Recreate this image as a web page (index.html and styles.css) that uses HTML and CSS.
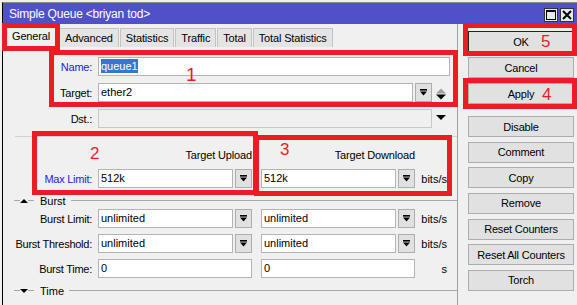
FILE: index.html
```html
<!DOCTYPE html>
<html lang="en">
<head>
    <meta charset="UTF-8">
    <title>Simple Queue</title>
    <link rel="stylesheet" href="styles.css">
</head>
<body>
    <div class="window">
        <div class="titlebar">
            <span class="title">Simple Queue &lt;briyan tod&gt;</span>
            <div class="win-btns">
                <span class="win-btn">
                    <svg width="10" height="10" viewBox="0 0 10 10"><rect x="0.5" y="0.5" width="9" height="9" fill="none" stroke="#000"/><rect x="0" y="0" width="10" height="2" fill="#000"/></svg>
                </span>
                <span class="win-btn">
                    <svg width="10" height="10" viewBox="0 0 10 10"><path d="M1 1 L9 9 M9 1 L1 9" stroke="#000" stroke-width="2"/></svg>
                </span>
            </div>
        </div>

        <div class="main">
            <div class="pane">
                <div class="tabs">
                    <span class="tab active">General</span>
                    <span class="tab">Advanced</span>
                    <span class="tab">Statistics</span>
                    <span class="tab">Traffic</span>
                    <span class="tab">Total</span>
                    <span class="tab">Total Statistics</span>
                </div>

                <div class="page">
                    <div class="row row-name">
                        <label class="lbl blue">Name:</label>
                        <div class="field w-name"><span class="sel">queue1</span></div>
                    </div>
                    <div class="row row-gap">
                        <label class="lbl">Target:</label>
                        <div class="field w-target">ether2</div>
                        <span class="drop"><svg width="7" height="7" viewBox="0 0 7 7"><rect x="0" y="0" width="7" height="1.6" fill="#000"/><path d="M0 2.6 H7 L3.5 6.6 Z" fill="#000"/></svg></span>
                        <span class="spin">
                            <svg width="10" height="12" viewBox="0 0 10 12"><path d="M0 5.5 H10 L5 0.5 Z" fill="#a0a0a0"/><path d="M0 6.5 H10 L5 11.5 Z" fill="#000"/></svg>
                        </span>
                    </div>
                    <div class="row row-gap">
                        <label class="lbl">Dst.:</label>
                        <div class="field w-dst disabled"></div>
                        <span class="tri-down"><svg width="10" height="5" viewBox="0 0 10 5"><path d="M0 0 H10 L5 5 Z" fill="#000"/></svg></span>
                    </div>

                    <div class="separator"></div>

                    <div class="row row-head">
                        <span class="lbl"></span>
                        <span class="col col-text">Target Upload</span>
                        <span class="col col-text">Target Download</span>
                    </div>

                    <div class="row row-max">
                        <label class="lbl blue">Max Limit:</label>
                        <div class="col">
                            <div class="field grow">512k</div>
                            <span class="drop"><svg width="7" height="7" viewBox="0 0 7 7"><rect x="0" y="0" width="7" height="1.6" fill="#000"/><path d="M0 2.6 H7 L3.5 6.6 Z" fill="#000"/></svg></span>
                        </div>
                        <div class="col">
                            <div class="field grow">512k</div>
                            <span class="drop"><svg width="7" height="7" viewBox="0 0 7 7"><rect x="0" y="0" width="7" height="1.6" fill="#000"/><path d="M0 2.6 H7 L3.5 6.6 Z" fill="#000"/></svg></span>
                        </div>
                        <span class="unit">bits/s</span>
                    </div>

                    <div class="group group-burst">
                        <span class="g-line short"></span>
                        <svg class="g-tri" width="8" height="4" viewBox="0 0 8 4"><path d="M0 4 H8 L4 0 Z" fill="#000"/></svg>
                        <span class="g-line short"></span>
                        <span class="g-title">Burst</span>
                        <span class="g-line long"></span>
                    </div>

                    <div class="row row-first">
                        <label class="lbl">Burst Limit:</label>
                        <div class="col">
                            <div class="field grow">unlimited</div>
                            <span class="drop"><svg width="7" height="7" viewBox="0 0 7 7"><rect x="0" y="0" width="7" height="1.6" fill="#000"/><path d="M0 2.6 H7 L3.5 6.6 Z" fill="#000"/></svg></span>
                        </div>
                        <div class="col">
                            <div class="field grow">unlimited</div>
                            <span class="drop"><svg width="7" height="7" viewBox="0 0 7 7"><rect x="0" y="0" width="7" height="1.6" fill="#000"/><path d="M0 2.6 H7 L3.5 6.6 Z" fill="#000"/></svg></span>
                        </div>
                        <span class="unit">bits/s</span>
                    </div>
                    <div class="row row-next">
                        <label class="lbl">Burst Threshold:</label>
                        <div class="col">
                            <div class="field grow">unlimited</div>
                            <span class="drop"><svg width="7" height="7" viewBox="0 0 7 7"><rect x="0" y="0" width="7" height="1.6" fill="#000"/><path d="M0 2.6 H7 L3.5 6.6 Z" fill="#000"/></svg></span>
                        </div>
                        <div class="col">
                            <div class="field grow">unlimited</div>
                            <span class="drop"><svg width="7" height="7" viewBox="0 0 7 7"><rect x="0" y="0" width="7" height="1.6" fill="#000"/><path d="M0 2.6 H7 L3.5 6.6 Z" fill="#000"/></svg></span>
                        </div>
                        <span class="unit">bits/s</span>
                    </div>
                    <div class="row row-next">
                        <label class="lbl">Burst Time:</label>
                        <div class="col">
                            <div class="field grow">0</div>
                        </div>
                        <div class="col">
                            <div class="field grow">0</div>
                        </div>
                        <span class="unit">s</span>
                    </div>

                    <div class="group group-time">
                        <span class="g-line short"></span>
                        <svg class="g-tri" width="8" height="4" viewBox="0 0 8 4"><path d="M0 0 H8 L4 4 Z" fill="#000"/></svg>
                        <span class="g-line short"></span>
                        <span class="g-title">Time</span>
                        <span class="g-line long"></span>
                    </div>
                </div>
            </div>

            <div class="actions">
                <button class="btn default">OK</button>
                <button class="btn">Cancel</button>
                <button class="btn">Apply</button>
                <div class="actions-lower">
                    <button class="btn">Disable</button>
                    <button class="btn">Comment</button>
                    <button class="btn">Copy</button>
                    <button class="btn">Remove</button>
                    <button class="btn">Reset Counters</button>
                    <button class="btn">Reset All Counters</button>
                    <button class="btn">Torch</button>
                </div>
            </div>
        </div>
    </div>

    <!-- red annotation boxes drawn over the screenshot -->
    <div class="mark box-general"></div>
    <div class="mark box-1"></div>
    <div class="mark box-2"></div>
    <div class="mark box-3"></div>
    <div class="mark box-ok"></div>
    <div class="mark box-apply"></div>
    <span class="num num-1">1</span>
    <span class="num num-2">2</span>
    <span class="num num-3">3</span>
    <span class="num num-4">4</span>
    <span class="num num-5">5</span>
</body>
</html>
```

FILE: styles.css
```css
body {
    margin: 0;
    padding-top: 2px;
    height: 303px;
    overflow: hidden;
    background-color: #f0f0f0;
    font-family: "Liberation Sans", Arial, sans-serif;
    font-size: 11px;
    color: #000;
}

.window {
    margin-left: 2px;
    border-left: 1px solid #000;
    border-top: 1px solid #8a8a8a;
    height: 302px;
}

.titlebar {
    height: 21px;
    background-color: #5050c8;
    display: flex;
    align-items: center;
    justify-content: space-between;
}

.title {
    color: #fff;
    font-size: 12px;
    letter-spacing: -0.2px;
    padding-left: 6px;
    padding-top: 1px;
}

.win-btns {
    display: flex;
    gap: 2px;
    margin-right: 3px;
    margin-top: 2px;
}

.win-btn {
    width: 12px;
    height: 12px;
    border: 1px solid #333;
    background-color: #e8e8e8;
    display: flex;
    align-items: center;
    justify-content: center;
}

.main {
    display: flex;
    height: 281px;
}

.pane {
    width: 454px;
    border-right: 1px solid #a0a0a0;
}

.actions {
    flex: 1;
    padding: 7px 0 0 10px;
    display: flex;
    flex-direction: column;
}

.btn {
    width: 106px;
    height: 21px;
    margin: 0 0 5px 0;
    padding: 0;
    border: 1px solid #adadad;
    background-color: #e1e1e1;
    font-family: inherit;
    font-size: 11px;
    letter-spacing: -0.2px;
    color: #000;
}

.btn.default {
    border-color: #222;
}

.actions-lower {
    margin-top: 7px;
    display: flex;
    flex-direction: column;
}

.actions-lower .btn {
    margin-bottom: 4.67px;
}

/* tabs */
.tabs {
    height: 23px;
    display: flex;
    align-items: flex-end;
    padding-left: 1px;
    gap: 1px;
}

.tab {
    height: 18px;
    line-height: 18px;
    padding: 0 5px;
    letter-spacing: -0.15px;
    border: 1px solid #c3c3c3;
    border-bottom: none;
    background-color: #e4e4e4;
}

.tab.active {
    height: 21px;
    line-height: 20px;
    padding: 0 7px;
    background-color: #f0f0f0;
}

/* form */
.page {
    padding-top: 10px;
}

.row {
    display: flex;
    align-items: center;
    height: 19px;
}

.row-gap {
    margin-top: 7px;
}

.lbl {
    width: 89px;
    margin-right: 6px;
    text-align: right;
    white-space: nowrap;
    letter-spacing: -0.25px;
    flex-shrink: 0;
}

.lbl.blue {
    color: #1c1ce0;
}

.field {
    box-sizing: border-box;
    height: 19px;
    line-height: 17px;
    border: 1px solid #b4b4b4;
    background-color: #fff;
    padding-left: 2px;
    white-space: nowrap;
    overflow: hidden;
}

.field.disabled {
    background-color: #f0f0f0;
    border-color: #c8c8c8;
}

.w-name { width: 352px; }
.w-target { width: 315px; }
.w-dst { width: 334px; }

.sel {
    background-color: #3478d6;
    color: #fff;
    padding: 1px 0;
}

.drop {
    box-sizing: border-box;
    width: 17px;
    height: 19px;
    margin-left: 2px;
    border: 1px solid #adadad;
    background-color: #e1e1e1;
    display: flex;
    align-items: center;
    justify-content: center;
    flex-shrink: 0;
}

.spin {
    margin-left: 4px;
    display: flex;
    margin-top: 2px;
}

.tri-down {
    margin-left: 4px;
    display: flex;
    margin-top: -2px;
}

.separator {
    margin: 8px 0 0 12px;
    border-top: 1px solid #d2d2d2;
}

.row-head {
    margin-top: 8px;
}

.col {
    width: 154px;
    margin-right: 9px;
    display: flex;
    flex-shrink: 0;
}

.col + .col {
    margin-right: 0;
}

.col-text {
    justify-content: flex-end;
    letter-spacing: -0.15px;
}

.grow {
    flex: 1;
}

.unit {
    width: 32px;
    text-align: right;
}

.row-max {
    margin-top: 5px;
}

.row-first {
    margin-top: 2px;
}

.row-next {
    margin-top: 6px;
}

.group {
    display: flex;
    align-items: center;
    height: 13px;
}

.group-burst {
    margin-top: 6px;
}

.group-time {
    margin-top: 6px;
}

.g-line {
    height: 1px;
    background-color: #a8a8a8;
}

.g-line.short {
    width: 6px;
}

.group .g-line:first-child {
    margin-left: 11px;
}

.g-title {
    margin: 0 5px 0 6px;
}

.g-line.long {
    flex: 1;
}

/* annotations */
.mark {
    position: absolute;
    box-sizing: border-box;
    border: 5px solid #ed1c24;
}

.box-general { left: 2px; top: 23px; width: 58px; height: 28px; }
.box-1 { left: 49px; top: 50px; width: 409px; height: 57px; }
.box-2 { left: 32px; top: 131px; width: 226px; height: 64px; }
.box-3 { left: 254px; top: 135px; width: 198px; height: 61px; }
.box-ok { left: 463px; top: 23px; width: 114px; height: 33px; }
.box-apply { left: 463px; top: 78px; width: 114px; height: 31px; }

.num {
    position: absolute;
    color: #ed1c24;
    font-size: 17px;
    line-height: 17px;
}

.num-1 { left: 186px; top: 65px; font-size: 19px; line-height: 19px; }
.num-2 { left: 90px; top: 145px; }
.num-3 { left: 280px; top: 141px; }
.num-4 { left: 542px; top: 86px; }
.num-5 { left: 541px; top: 33px; }
```
